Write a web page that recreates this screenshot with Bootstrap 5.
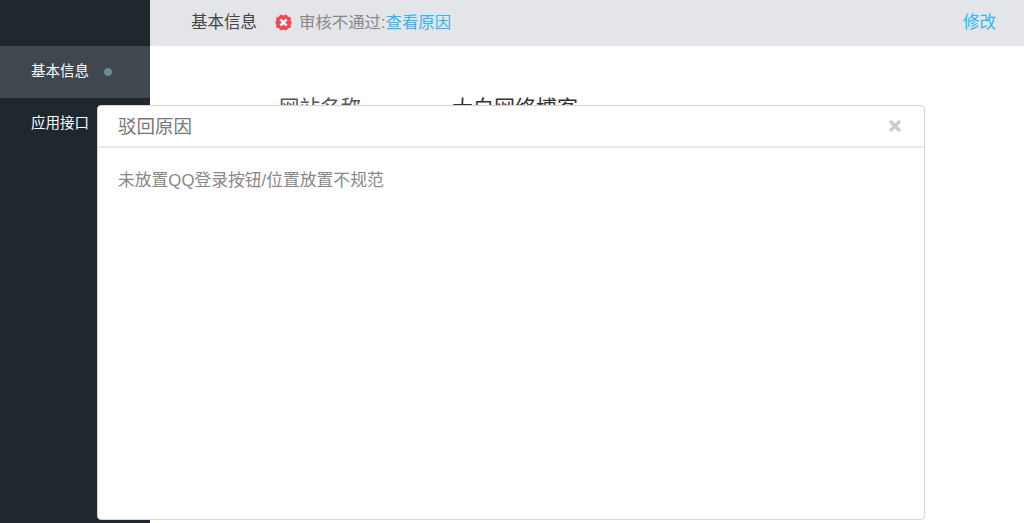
<!DOCTYPE html>
<html lang="zh">
<head>
<meta charset="utf-8">
<link href="https://cdn.jsdelivr.net/npm/bootstrap@5.3.0/dist/css/bootstrap.min.css" rel="stylesheet">
<style>
html,body{height:100%;overflow:hidden;}
body{font-family:"Liberation Sans","Noto Sans CJK SC",sans-serif;background:#fff;color:#333;}
.shell{height:523px;position:relative;overflow:hidden;}
.side{width:150px;background:#1f272f;padding-top:46px;flex:none;}
.side-item{height:52px;padding:1px 0 2px 31px;font-size:14.5px;color:#fff;}
.side-item.on{background:#40474e;}
.dot{width:8px;height:8px;border-radius:50%;background:#6f8796;margin:1px 0 0 15px;}
.topbar{height:46px;background:#e4e5e9;padding:0 28px 2px 41px;font-size:16.5px;}
.topbar-title{color:#444;width:84px;}
.status{color:#888;font-size:16.4px;}
.status svg{margin:2px 7px 0 0;}
.lnk{color:#2db7f5;text-decoration:none;}
.info{padding:50px 0 0 129px;font-size:20.5px;line-height:24px;color:#555;}
.info-label{width:173px;}
.info-val{color:#333;font-size:21px;}
.dlg{position:absolute;left:97px;top:105px;width:828px;height:415px;background:#fff;border:1px solid #d4d4d4;border-radius:4px;}
.dlg-head{height:42px;padding:2px 22px 0 20px;border-bottom:2px solid #e8e8e8;font-size:18.5px;color:#777;}
.dlg-x{color:#ccc;margin-top:-2px;}
.dlg-body{padding:22px 20px;font-size:16.8px;line-height:22px;color:#888;}
</style>
</head>
<body>
<div class="shell d-flex">
  <nav class="side">
    <div class="side-item on d-flex align-items-center">基本信息<span class="dot"></span></div>
    <div class="side-item d-flex align-items-center">应用接口</div>
  </nav>
  <main class="flex-grow-1">
    <header class="topbar d-flex align-items-center">
      <span class="topbar-title">基本信息</span>
      <span class="status d-flex align-items-center">
        <svg width="17" height="17" viewBox="0 0 17 17"><polygon points="5.8,0.4 8.5,1.6 11.2,0.4 13.2,2.8 15.9,3.6 15.6,6.2 16.8,8.5 15.6,10.8 15.9,13.4 13.2,14.2 11.2,16.6 8.5,15.4 5.8,16.6 3.8,14.2 1.1,13.4 1.4,10.8 0.2,8.5 1.4,6.2 1.1,3.6 3.8,2.8" fill="#ef4a52"/><path d="M5.4 5.4l6.2 6.2M11.6 5.4l-6.2 6.2" stroke="#fff" stroke-width="2.6"/></svg>
        审核不通过:<a class="lnk" href="#">查看原因</a>
      </span>
      <a class="lnk ms-auto" href="#">修改</a>
    </header>
    <section class="info d-flex">
      <span class="info-label">网站名称</span>
      <span class="info-val">大白网络博客</span>
    </section>
  </main>
  <div class="dlg">
    <div class="dlg-head d-flex align-items-center justify-content-between">
      <span>驳回原因</span>
      <svg class="dlg-x" width="14" height="14" viewBox="0 0 14 14"><path d="M2 2l10 10M12 2L2 12" stroke="currentColor" stroke-width="3.4"/></svg>
    </div>
    <div class="dlg-body">未放置QQ登录按钮/位置放置不规范</div>
  </div>
</div>
<script src="https://cdn.jsdelivr.net/npm/bootstrap@5.3.0/dist/js/bootstrap.bundle.min.js"></script>
</body>
</html>
